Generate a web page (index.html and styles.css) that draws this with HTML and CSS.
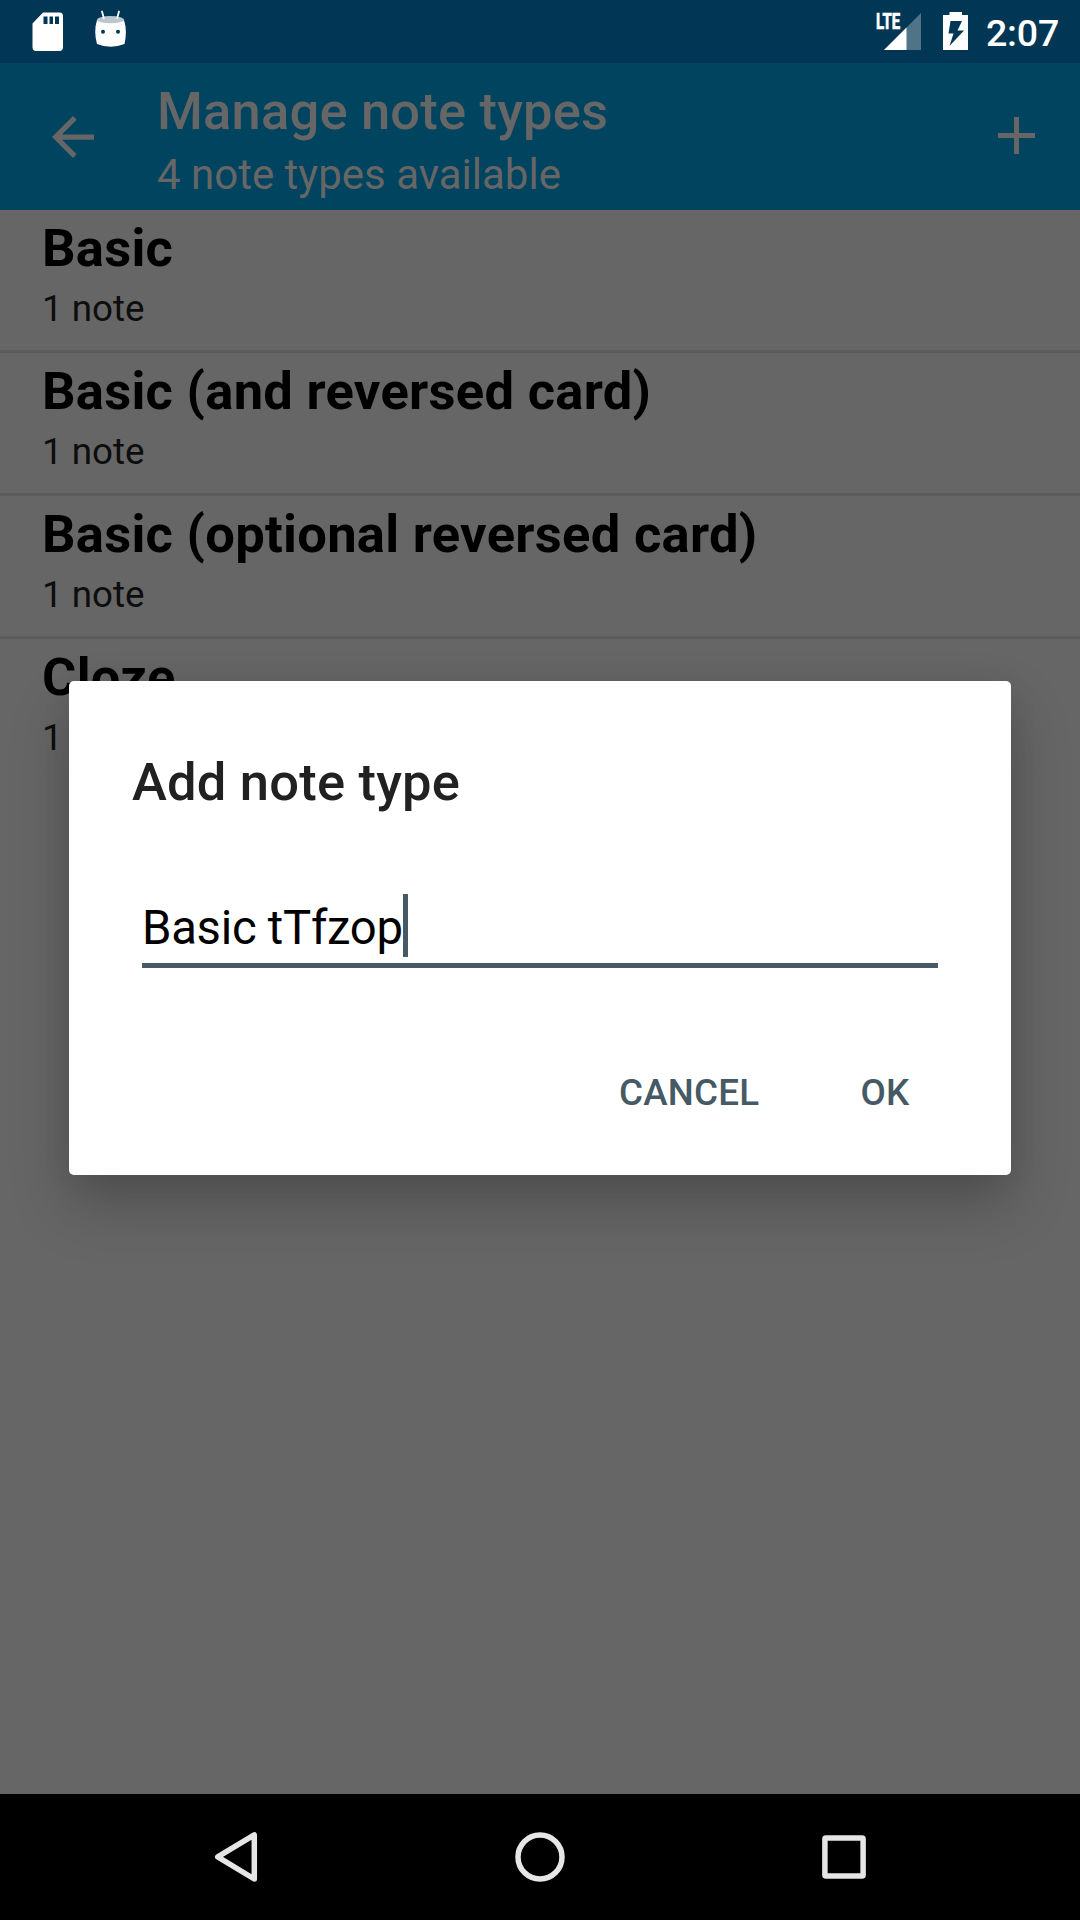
FILE: index.html
```html
<!DOCTYPE html>
<html lang="en">
<head>
<meta charset="utf-8">
<title>Manage note types</title>
<link rel="stylesheet" href="styles.css">
</head>
<body>
<div class="screen">
  <header class="status">
    <svg class="status-left" width="130" height="63" viewBox="0 0 130 63">
      <path fill="#fff" fill-rule="evenodd" d="M43 12.500H59.500Q63 12.500 63 16V47Q63 51 59.500 51H36Q32.500 51 32.500 47V23.500ZM43.500 16.500V24H47.500V16.500ZM49.500 16.500V24H53V16.500ZM55 16.500V24H59V16.500Z"/>
      <path fill="#fff" d="M97 20Q110.500 26 124 20Q127.500 31 124.500 44Q110.500 49.500 97 44Q93.500 31 97 20Z"/>
      <ellipse cx="110.500" cy="19.700" rx="13.500" ry="3.600" fill="#b9c8cf"/>
      <path stroke="#fff" stroke-width="1.800" stroke-linecap="round" d="M102 11.500L103.800 18M119 11.500L117.200 18"/>
      <circle cx="103" cy="31.700" r="2" fill="#013654"/><circle cx="118" cy="31.700" r="2" fill="#013654"/>
    </svg>
    <div class="status-right">
      <div class="signal">
        <svg width="47" height="38" viewBox="0 0 47 38"><path fill="#507387" d="M46 0V37H9Z"/><path fill="#fff" d="M31.500 14.500V37H9Z"/></svg>
        <span class="lte">LTE</span>
      </div>
      <svg class="battery" width="25" height="38" viewBox="0 0 25 38"><path fill="#fff" fill-rule="evenodd" d="M6.500 0H19V3H25V38H0V3H6.500ZM7.500 9H19L14.500 18.500H21L6.500 34L10.500 21.500H5.500Z"/></svg>
      <span class="clock">2:07</span>
    </div>
  </header>
  <div class="appbar">
    <svg class="back" width="42" height="42" viewBox="0 0 16 16"><path fill="#666" d="M16 7H3.830L9.420 1.410L8 0L0 8L8 16L9.410 14.590L3.830 9H16Z"/></svg>
    <div class="heading">
      <h1 class="title">Manage note types</h1>
      <p class="subtitle">4 note types available</p>
    </div>
    <svg class="add" width="37" height="37" viewBox="0 0 37 37"><path fill="#666" d="M16 0H21V16H37V21H21V37H16V21H0V16H16Z"/></svg>
  </div>
  <main class="list">
    <div class="row"><h2 class="name">Basic</h2><p class="count">1 note</p></div>
    <div class="row"><h2 class="name">Basic (and reversed card)</h2><p class="count">1 note</p></div>
    <div class="row"><h2 class="name">Basic (optional reversed card)</h2><p class="count">1 note</p></div>
    <div class="row last"><h2 class="name">Cloze</h2><p class="count">1 note</p></div>
  </main>
  <nav class="nav">
    <svg width="1080" height="126" viewBox="0 0 1080 126" fill="none" stroke="#e6e6e6" stroke-width="5.500" stroke-linejoin="round">
      <path d="M254.300 40.800V85L217.700 62.900Z"/>
      <circle cx="540" cy="63" r="22"/>
      <rect x="824.900" y="43.900" width="38.200" height="38.200" rx="1"/>
    </svg>
  </nav>
  <section class="dialog">
    <h2 class="dialog-title">Add note type</h2>
    <div class="field"><span class="value">Basic tTfzop</span><span class="caret"></span></div>
    <div class="actions"><span class="action">CANCEL</span><span class="action">OK</span></div>
  </section>
</div>
</body>
</html>
```
FILE: styles.css
```css
* { box-sizing: border-box; margin: 0; padding: 0; }
body { font-family: Roboto, "Noto Sans", sans-serif; background: #666; }
svg { display: block; }
.screen { position: relative; width: 1080px; height: 1920px; display: flex; flex-direction: column; background: #666; overflow: hidden; }
.status { height: 63px; background: #013654; display: flex; justify-content: space-between; color: #fff; }
.status-right { display: flex; align-items: flex-start; padding: 12px 21px 0 0; }
.signal { position: relative; margin: 1px 21px 0 0; }
.lte { position: absolute; left: .5px; top: -2px; font-size: 22px; line-height: 22px; font-weight: 700; -webkit-text-stroke: .7px #fff; transform: scaleX(.68); transform-origin: 0 0; }
.battery { margin-right: 18px; }
.clock { width: 73px; font-size: 37.500px; line-height: 42px; font-weight: 500; letter-spacing: -.2px; white-space: nowrap; }
.appbar { height: 147px; background: #00445f; display: flex; color: #666; padding: 17px 45px 0 52px; }
.back { margin-top: 35.500px; }
.heading { flex: 1; margin-left: 63px; }
.title { font-size: 52.500px; line-height: 62px; font-weight: 500; letter-spacing: .18px; }
.subtitle { margin-top: 8px; font-size: 42px; line-height: 50px; }
.add { margin-top: 37px; }
.list { flex: 1; }
.row { height: 143px; padding: 7px 42px 0; border-bottom: 3px solid #5b5b5b; }
.row.last { border-bottom: 0; }
.name { font-size: 52.500px; line-height: 62px; font-weight: 700; letter-spacing: .29px; color: #000; }
.count { margin-top: 8px; font-size: 36.750px; line-height: 43px; color: #0d0d0d; }
.nav { height: 126px; background: #000; }
.dialog { position: absolute; left: 69px; top: 681px; width: 942px; height: 494px; padding: 70px 63px 0; background: #fff; border-radius: 5px; box-shadow: 0 30px 60px rgba(0, 0, 0, .22), 0 4px 30px rgba(0, 0, 0, .07); }
.dialog-title { font-size: 52.500px; line-height: 62px; font-weight: 500; letter-spacing: .2px; color: #212121; }
.field { margin: 81px 10px 0; height: 74px; display: flex; border-bottom: 5px solid #455a64; }
.value { font-size: 47.250px; line-height: 68px; letter-spacing: -.28px; color: #000; }
.caret { width: 5px; height: 63px; background: #455a64; }
.actions { display: flex; justify-content: flex-end; gap: 101px; margin-top: 103px; padding-right: 38.500px; }
.action { font-size: 36.750px; line-height: 43px; font-weight: 500; letter-spacing: .25px; color: #455a64; }
```
